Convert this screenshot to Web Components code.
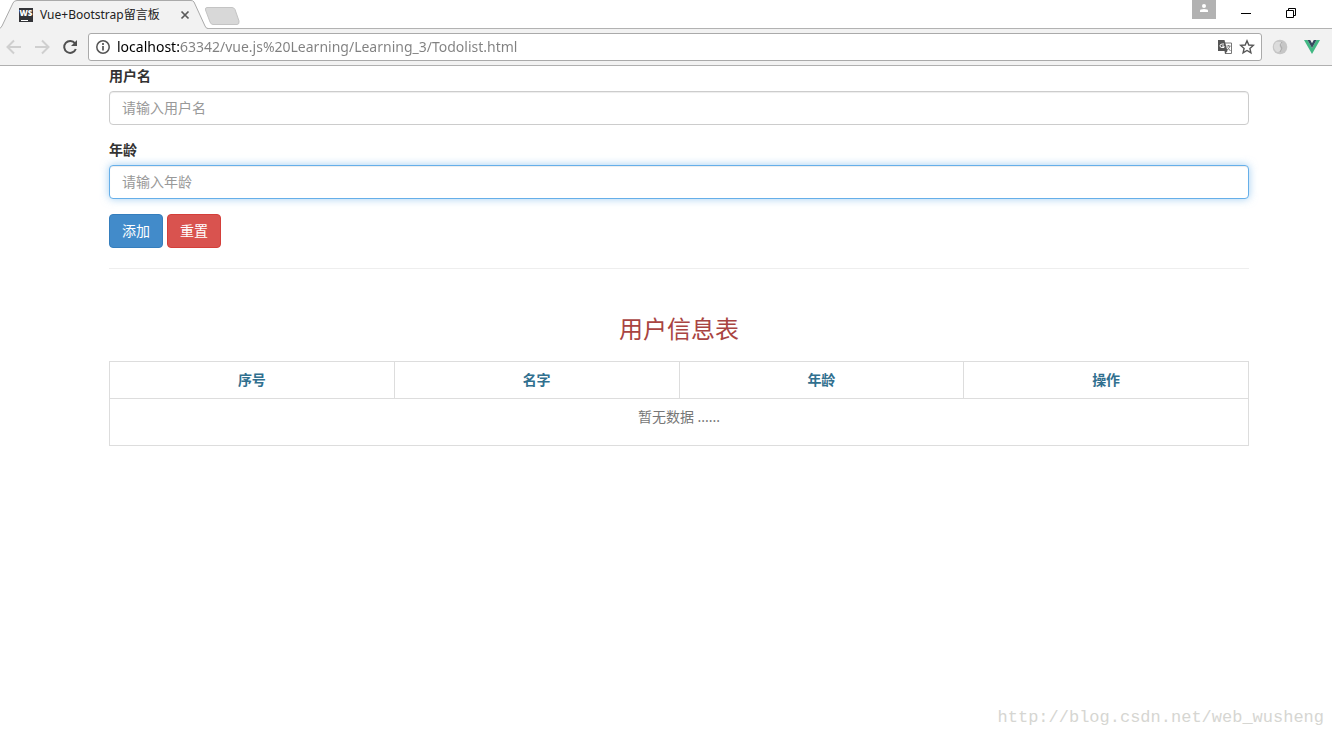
<!DOCTYPE html>
<html lang="zh-CN">
<head>
<meta charset="utf-8">
<title>Vue+Bootstrap留言板</title>
<style>
  html, body { margin: 0; height: 100%; }
  body { background: #fff; color: #333; font: 14px/20px "Noto Sans", "Noto Sans CJK SC", sans-serif; overflow: hidden; }
</style>
</head>
<body>
<browser-window>
  <tab-strip slot="tabs">Vue+Bootstrap留言板</tab-strip>
  <browser-toolbar slot="toolbar" url="localhost:63342/vue.js%20Learning/Learning_3/Todolist.html"></browser-toolbar>
  <message-board></message-board>
  <page-watermark slot="watermark">http://blog.csdn.net/web_wusheng</page-watermark>
</browser-window>

<script>
const define = (name, html, setup) => {
  const template = document.createElement('template');
  template.innerHTML = html;
  customElements.define(name, class extends HTMLElement {
    constructor() {
      super();
      this.attachShadow({ mode: 'open' }).append(template.content.cloneNode(true));
    }
    connectedCallback() {
      if (setup) setup(this, this.shadowRoot);
    }
  });
};

define('browser-window', `
  <style>
    :host { display: flex; flex-direction: column; min-height: 100%; position: relative; }
    main { flex: 1; }
  </style>
  <header><slot name="tabs"></slot><slot name="toolbar"></slot></header>
  <main><slot></slot></main>
  <slot name="watermark"></slot>
`);

define('tab-strip', `
  <style>
    :host { display: flex; height: 29px; background: #fff; border-bottom: 1px solid #b2b2b2; box-sizing: border-box; font-size: 12px; line-height: 16px; color: #222; }
    .tab { position: relative; display: flex; align-items: center; width: 204px; height: 29px; padding-left: 19px; padding-right: 14px; box-sizing: border-box; }
    .shape { position: absolute; left: 0; top: 0; }
    .favicon, .title, .close { position: relative; }
    .favicon { width: 14px; height: 14px; margin-right: 7px; }
    .title { flex: 1; white-space: nowrap; }
    button { display: flex; align-items: center; justify-content: center; border: 0; padding: 0; background: none; }
    .close { width: 10px; height: 28px; }
    .new { height: 28px; }
    .controls { display: flex; margin-left: auto; }
    .user { width: 24px; height: 19px; background: #b2b2b2; }
    .win { width: 45px; height: 27px; }
    .min { margin-left: 8px; }
    .edge { width: 18px; }
  </style>
  <div class="tab">
    <svg class="shape" width="208" height="29" viewBox="0 0 208 29"><path d="M0 29V28.500L2 26L13 3Q14 .5 17 .5H191Q193 .5 194 2L205 26Q206 28.500 208 28.500V29Z" fill="#f2f2f2"/><path d="M0 28.500L2 26L13 3Q14 .5 17 .5H191Q193 .5 194 2L205 26Q206 28.500 208 28.500" fill="none" stroke="#aaa"/></svg>
    <svg class="favicon" viewBox="0 0 14 14" aria-hidden="true"><rect width="14" height="14" fill="#333438"/><text x="7" y="8" text-anchor="middle" font-family="Open Sans, sans-serif" font-weight="800" font-size="8" fill="#fff">WS</text><path d="M2 12.500h7" stroke="#fff"/></svg>
    <span class="title"><slot></slot></span>
    <button class="close" aria-label="关闭标签页"><svg width="10" height="10"><path d="M1.5 1.5l7 7m0-7l-7 7" stroke="#5a5a5a" stroke-width="1.7"/></svg></button>
  </div>
  <button class="new" aria-label="新标签页"><svg width="36" height="28"><path d="M3 7.500H28Q30 7.500 31 9.500L35 21Q35.500 24.500 33 24.500H9Q7 24.500 6 22L1.500 10Q1 7.500 3 7.500Z" fill="#d8d8d8" stroke="#c4c4c4"/></svg></button>
  <div class="controls">
    <button class="user" aria-label="用户"><svg width="24" height="19"><circle cx="12" cy="6" r="2" fill="#fff"/><path d="M8 12V10.500Q8 9 12 9T16 10.500V12Z" fill="#fff"/></svg></button>
    <button class="win min" aria-label="最小化"><svg width="11" height="11"><path d="M0 5.500h10" stroke="#000"/></svg></button>
    <button class="win" aria-label="还原"><svg width="11" height="11"><path d="M.5 2.500h7v7h-7zM2.500 2V.5h7v7H8" fill="none" stroke="#000"/></svg></button>
    <span class="edge"></span>
  </div>
`);

define('browser-toolbar', `
  <style>
    :host { display: flex; align-items: center; height: 37px; box-sizing: border-box; padding: 0 12px 0 0; background: #f2f2f2; border-bottom: 1px solid #b0b0b0; }
    button { display: flex; align-items: center; justify-content: center; width: 28px; height: 28px; border: 0; padding: 0; background: none; flex: none; }
    .field { display: flex; align-items: center; flex: 1; height: 28px; margin-left: 4px; margin-right: 10px; padding: 0 3px 0 6px; border: 1px solid #aaa; border-radius: 3px; background: #fff; box-sizing: border-box; }
    .info { width: 16px; margin-right: 6px; }
    .small { width: 22px; }
    .ext { width: 16px; }
    .vue { margin-left: 16px; }
    input { flex: 1; min-width: 0; height: 24px; border: 0; padding: 0; outline: 0; font: 14px/24px "Noto Sans", sans-serif; color: transparent; background: linear-gradient(to right, #000 64px, #808080 64px); -webkit-background-clip: text; background-clip: text; }
  </style>
  <button aria-label="后退"><svg width="16" height="16" fill="none" stroke="#cfcfcf" stroke-width="2"><path d="M15 8H2M8 1.500L1.500 8 8 14.500"/></svg></button>
  <button aria-label="前进"><svg width="16" height="16" fill="none" stroke="#cfcfcf" stroke-width="2"><path d="M1 8h13M8 1.500L14.500 8 8 14.500"/></svg></button>
  <button aria-label="刷新"><svg width="16" height="16"><path d="M13 4.300A6 6 0 1 0 13.800 10" fill="none" stroke="#505050" stroke-width="2"/><path d="M15 1v6H9z" fill="#505050"/></svg></button>
  <div class="field">
    <button class="info" aria-label="网站信息"><svg width="16" height="16"><circle cx="8" cy="8" r="6.200" fill="none" stroke="#555" stroke-width="1.500"/><path d="M8 7v4.500M8 4v2" stroke="#555" stroke-width="1.700"/></svg></button>
    <input type="text" aria-label="地址" spellcheck="false">
    <button class="small" aria-label="翻译"><svg width="16" height="16"><path d="M6 4h8.500v10.500H8" fill="#fff" stroke="#777"/><path d="M1 1h6.500L10.500 12H1z" fill="#555"/><path d="M7 5H5.200Q3 5 3 6.800T5 8.500H7V7H5" fill="none" stroke="#fff"/><path d="M9.500 7h4M11.500 6v1M13 7q-1 3-3 4M10.500 8.500l3 3.500" stroke="#777" fill="none"/><path d="M7.500 12h3L8 15z" fill="#555"/></svg></button>
    <button class="small" aria-label="收藏"><svg width="16" height="16"><path d="M8 1.800l1.800 4.200 4.500.4-3.400 3 1 4.500L8 11.500l-3.900 2.400 1-4.500-3.400-3 4.500-.4z" fill="none" stroke="#555" stroke-width="1.400"/></svg></button>
  </div>
  <button class="ext" aria-label="扩展程序"><svg width="16" height="16"><circle cx="8" cy="8" r="7.300" fill="#c6c6c6"/><path d="M4 3Q10 2 10 5Q6 7 9 10Q9 13 5 13Q1 10 2 6Z" fill="#dcdcdc"/><path d="M10 3L8 6l2 3-2 4" fill="none" stroke="#aaa"/></svg></button>
  <button class="ext vue" aria-label="Vue.js devtools"><svg width="16" height="16"><path d="M0 1h3.500L8 9l4.500-8H16L8 15z" fill="#41b883"/><path d="M3.500 1h2.700L8 4.200 9.800 1h2.700L8 9z" fill="#35495e"/></svg></button>
`, (host, root) => { root.querySelector('input').value = host.getAttribute('url'); });

define('form-field', `
  <style>
    :host { display: block; margin-bottom: 15px; }
    label { display: block; margin-bottom: 5px; font-weight: 700; line-height: 20px; }
    input { display: block; width: 100%; height: 34px; box-sizing: border-box; padding: 5px 12px 7px; border: 1px solid #ccc; border-radius: 4px; font: inherit; color: #555; background: #fff; box-shadow: inset 0 1px 1px rgba(0,0,0,.075); outline: 0; }
    input::placeholder { color: #999; opacity: 1; }
    :host([active]) input { border-color: #66afe9; box-shadow: inset 0 1px 1px rgba(0,0,0,.075), 0 0 8px rgba(102,175,233,.6); }
  </style>
  <label for="control"><slot></slot></label>
  <input id="control" type="text">
`, (host, root) => { root.querySelector('input').placeholder = host.getAttribute('placeholder'); });

define('action-button', `
  <style>
    :host { display: block; }
    button { display: block; height: 34px; padding: 6px 12px; border: 1px solid #357ebd; border-radius: 4px; background: #428bca; color: #fff; font: inherit; line-height: 20px; }
    :host([kind="danger"]) button { background: #d9534f; border-color: #d43f3a; }
  </style>
  <button type="button"><slot></slot></button>
`);

define('user-table', `
  <style>
    :host { display: block; }
    table { width: 100%; table-layout: fixed; border-collapse: collapse; text-align: center; }
    caption { padding: 27px 0 19px; font-size: 24px; line-height: 26px; color: #a94442; }
    th, td { border: 1px solid #ddd; padding: 8px; line-height: 20px; }
    th { color: #31708f; font-weight: 700; }
    td { color: #777; }
    p { margin: 0 0 10px; }
  </style>
  <table>
    <caption>用户信息表</caption>
    <thead><tr><th scope="col">序号</th><th scope="col">名字</th><th scope="col">年龄</th><th scope="col">操作</th></tr></thead>
    <tbody><tr><td colspan="4"><p>暂无数据 ......</p></td></tr></tbody>
  </table>
`);

define('message-board', `
  <style>
    :host { display: block; padding: 0 83px 0 109px; }
    form { margin: 0; }
    .actions { display: flex; gap: 4px; }
    hr { margin: 20px 0; border: 0; border-top: 1px solid #eee; }
  </style>
  <form>
    <form-field placeholder="请输入用户名">用户名</form-field>
    <form-field placeholder="请输入年龄" active>年龄</form-field>
    <div class="actions"><action-button>添加</action-button><action-button kind="danger">重置</action-button></div>
  </form>
  <hr>
  <user-table></user-table>
`);

define('page-watermark', `
  <style>
    :host { position: absolute; right: 8px; bottom: 9px; font: 17px/20px "Liberation Mono", monospace; color: #d6d6d2; }
  </style>
  <slot></slot>
`);
</script>
</body>
</html>
